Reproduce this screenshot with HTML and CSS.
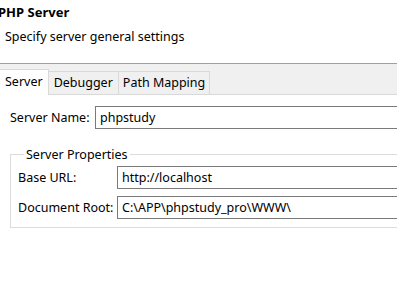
FILE: index.html
```html
<!DOCTYPE html>
<html lang="en">
<head>
    <meta charset="UTF-8">
    <title>PHP Server</title>
    <link rel="stylesheet" href="styles.css">
</head>
<body>
    <div class="header">
        <div class="title">PHP Server</div>
        <div class="subtitle">Specify server general settings</div>
    </div>

    <div class="tabs">
        <div class="tab active">Server</div>
        <div class="tab wide">Debugger</div>
        <div class="tab">Path Mapping</div>
    </div>

    <div class="content">
        <div class="row name-row">
            <label>Server Name:</label>
            <input type="text" value="phpstudy">
        </div>

        <fieldset class="group">
            <legend>Server Properties</legend>
            <div class="row">
                <label>Base URL:</label>
                <input type="text" value="http://localhost">
            </div>
            <div class="row">
                <label>Document Root:</label>
                <input type="text" value="C:\APP\phpstudy_pro\WWW\">
            </div>
        </fieldset>
    </div>
</body>
</html>
```

FILE: styles.css
```css
body {
    margin: 0;
    font-family: "Noto Sans", sans-serif;
    font-size: 12.5px;
    color: #000;
    background: #fff;
    overflow: hidden;
}
.header {
    height: 63px;
    overflow: hidden;
}
.title {
    font-weight: bold;
    font-size: 13px;
    padding-top: 3px;
    margin-left: -2px;
}
.subtitle {
    margin-top: 7px;
    padding-left: 5px;
}
.tabs {
    display: flex;
    align-items: flex-end;
    height: 30px;
    background: #f0f0f0;
    border-top: 1px solid #a0a0a0;
    border-bottom: 1px solid #d9d9d9;
}
.tab {
    height: 22px;
    line-height: 22px;
    padding: 0 4px;
    border: 1px solid #d9d9d9;
    border-bottom: none;
    margin-left: -1px;
}
.tab.wide {
    padding: 0 5px;
}
.tab.active {
    background: #fff;
    height: 24px;
    margin-bottom: -1px;
    margin-left: 0;
    padding: 0 5px 1px;
    line-height: 24px;
    border-left: none;
}
.content {
    padding: 11px 0 0 10px;
}
.row {
    display: flex;
    align-items: center;
}
.row label {
    flex: none;
}
.name-row label {
    width: 85px;
}
.group .row label {
    width: 99px;
}
.group .row + .row {
    margin-top: 7px;
}
input {
    flex: 1;
    min-width: 0;
    height: 23px;
    box-sizing: border-box;
    border: 1px solid #7a7a7a;
    font-family: inherit;
    font-size: 12.5px;
    padding: 0 4px;
    margin: 0 -10px 0 0;
    color: #000;
}
.group {
    margin: 17px -20px 0 0;
    padding: 3px 8px 8px 7px;
    border: 1px solid #dcdcdc;
}
.group legend {
    padding: 0 2px;
    margin-left: 6px;
}
```
